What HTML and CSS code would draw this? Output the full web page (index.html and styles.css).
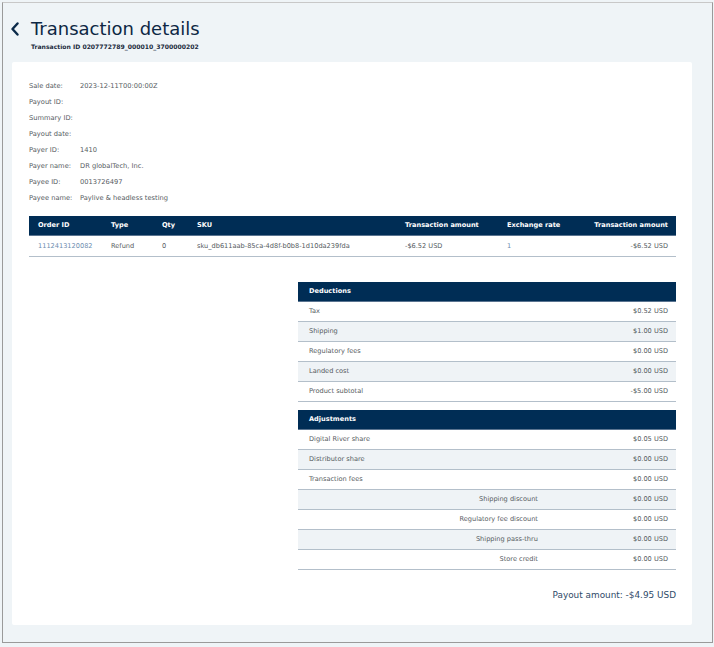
FILE: index.html
```html
<!DOCTYPE html>
<html>
<head>
<meta charset="utf-8">
<link rel="stylesheet" href="styles.css">
</head>
<body>
<div class="frame">
  <header class="page-head">
    <div class="title-row">
      <svg class="back" width="10" height="14" viewBox="0 0 10 14"><path d="M7.5 1.5 L2.5 7 L7.5 12.5" fill="none" stroke="#0b2a4a" stroke-width="2.4" stroke-linecap="round" stroke-linejoin="round"/></svg>
      <h1 class="title">Transaction details</h1>
    </div>
    <div class="subtitle">Transaction ID 0207772789_000010_3700000202</div>
  </header>
  <main class="card">
    <dl class="info">
      <div class="info-row"><dt>Sale date:</dt><dd>2023-12-11T00:00:00Z</dd></div>
      <div class="info-row"><dt>Payout ID:</dt><dd></dd></div>
      <div class="info-row"><dt>Summary ID:</dt><dd></dd></div>
      <div class="info-row"><dt>Payout date:</dt><dd></dd></div>
      <div class="info-row"><dt>Payer ID:</dt><dd>1410</dd></div>
      <div class="info-row"><dt>Payer name:</dt><dd>DR globalTech, Inc.</dd></div>
      <div class="info-row"><dt>Payee ID:</dt><dd>0013726497</dd></div>
      <div class="info-row"><dt>Payee name:</dt><dd>Paylive &amp; headless testing</dd></div>
    </dl>

    <table class="orders">
      <thead>
        <tr>
          <th class="c-order">Order ID</th>
          <th class="c-type">Type</th>
          <th class="c-qty">Qty</th>
          <th class="c-sku">SKU</th>
          <th class="c-amt">Transaction amount</th>
          <th class="c-rate">Exchange rate</th>
          <th class="c-total">Transaction amount</th>
        </tr>
      </thead>
      <tbody>
        <tr>
          <td class="c-order link">1112413120082</td>
          <td class="c-type">Refund</td>
          <td class="c-qty">0</td>
          <td class="c-sku">sku_db611aab-85ca-4d8f-b0b8-1d10da239fda</td>
          <td class="c-amt">-$6.52 USD</td>
          <td class="c-rate link">1</td>
          <td class="c-total">-$6.52 USD</td>
        </tr>
      </tbody>
    </table>

    <section class="summary">
      <div class="sum-head">Deductions</div>
      <div class="sum-row"><span class="lbl">Tax</span><span class="val">$0.52 USD</span></div>
      <div class="sum-row alt"><span class="lbl">Shipping</span><span class="val">$1.00 USD</span></div>
      <div class="sum-row"><span class="lbl">Regulatory fees</span><span class="val">$0.00 USD</span></div>
      <div class="sum-row alt"><span class="lbl">Landed cost</span><span class="val">$0.00 USD</span></div>
      <div class="sum-row"><span class="lbl">Product subtotal</span><span class="val">-$5.00 USD</span></div>

      <div class="sum-head gap">Adjustments</div>
      <div class="sum-row"><span class="lbl">Digital River share</span><span class="val">$0.05 USD</span></div>
      <div class="sum-row alt"><span class="lbl">Distributor share</span><span class="val">$0.00 USD</span></div>
      <div class="sum-row"><span class="lbl">Transaction fees</span><span class="val">$0.00 USD</span></div>
      <div class="sum-row alt"><span class="lbl sub">Shipping discount</span><span class="val">$0.00 USD</span></div>
      <div class="sum-row"><span class="lbl sub">Regulatory fee discount</span><span class="val">$0.00 USD</span></div>
      <div class="sum-row alt"><span class="lbl sub">Shipping pass-thru</span><span class="val">$0.00 USD</span></div>
      <div class="sum-row"><span class="lbl sub">Store credit</span><span class="val">$0.00 USD</span></div>
    </section>

    <div class="payout">Payout amount: -$4.95 USD</div>
  </main>
</div>
</body>
</html>
```

FILE: styles.css
```css
* { box-sizing: border-box; }
html, body { margin: 0; padding: 0; }
body {
  background: #eff4f7;
  font-family: "DejaVu Sans", "Open Sans", sans-serif;
  color: #555b61;
}
.frame {
  margin: 2px 0 0 2px;
  width: 711px;
  height: 641px;
  border: 1px solid #9a9a9a;
  border-top-color: #c8c8c8;
  background: #eff4f7;
  padding: 0 20px 17px 7px;
  display: flex;
  flex-direction: column;
}
.page-head { height: 59px; padding-top: 14px; }
.title-row { display: flex; align-items: center; gap: 11px; height: 24px; }
.back { flex: none; }
.title {
  margin: 0;
  font-size: 18px;
  font-weight: 400;
  color: #0d2744;
  line-height: 24px;
}
.subtitle {
  margin: 2px 0 0 21px;
  font-size: 6.1px;
  font-weight: 700;
  color: #1b2b3d;
}
.card {
  flex: 1;
  margin-left: 2px;
  background: #ffffff;
  border-radius: 2px;
  padding: 16px 16px 0 17px;
  display: flex;
  flex-direction: column;
}
.info { margin: 0; }
.info-row {
  display: flex;
  height: 16px;
  align-items: center;
  font-size: 6.7px;
}
.info-row dt { width: 51px; margin: 0; }
.info-row dd { margin: 0; }

.orders {
  margin-top: 10px;
  width: 100%;
  border-collapse: collapse;
  font-size: 6.6px;
}
.orders th {
  background: #002d55;
  color: #ffffff;
  font-weight: 700;
  text-align: left;
  height: 19px;
  padding: 0;
  border-bottom: 1px solid #5a7490;
}
.orders td {
  height: 21px;
  padding: 0;
  border-bottom: 1px solid #b3bfca;
}
.orders .c-order { padding-left: 9px; width: 82px; }
.orders .c-type { width: 51px; }
.orders .c-qty { width: 35px; }
.orders .c-sku { width: 208px; }
.orders .c-amt { width: 102px; }
.orders .c-total { text-align: right; padding-right: 8px; }
.link { color: #6d8db0; }

.summary {
  margin-top: 25px;
  align-self: flex-end;
  width: 378px;
  font-size: 6.6px;
}
.sum-head {
  background: #002d55;
  color: #ffffff;
  font-weight: 700;
  height: 20px;
  display: flex;
  align-items: center;
  padding-left: 11px;
  border-bottom: 1px solid #5a7490;
}
.sum-head.gap { margin-top: 8px; }
.sum-row {
  display: flex;
  height: 20px;
  align-items: center;
  justify-content: space-between;
  padding: 0 8px 0 11px;
  border-bottom: 1px solid #b3bfca;
}
.sum-row.alt { background: #eff3f6; }
.sum-row .lbl.sub { flex: 1; text-align: right; padding-right: 95px; }
.sum-row .val { text-align: right; }

.payout {
  margin-top: 20px;
  align-self: flex-end;
  font-size: 8.9px;
  color: #2e4a68;
}
```
